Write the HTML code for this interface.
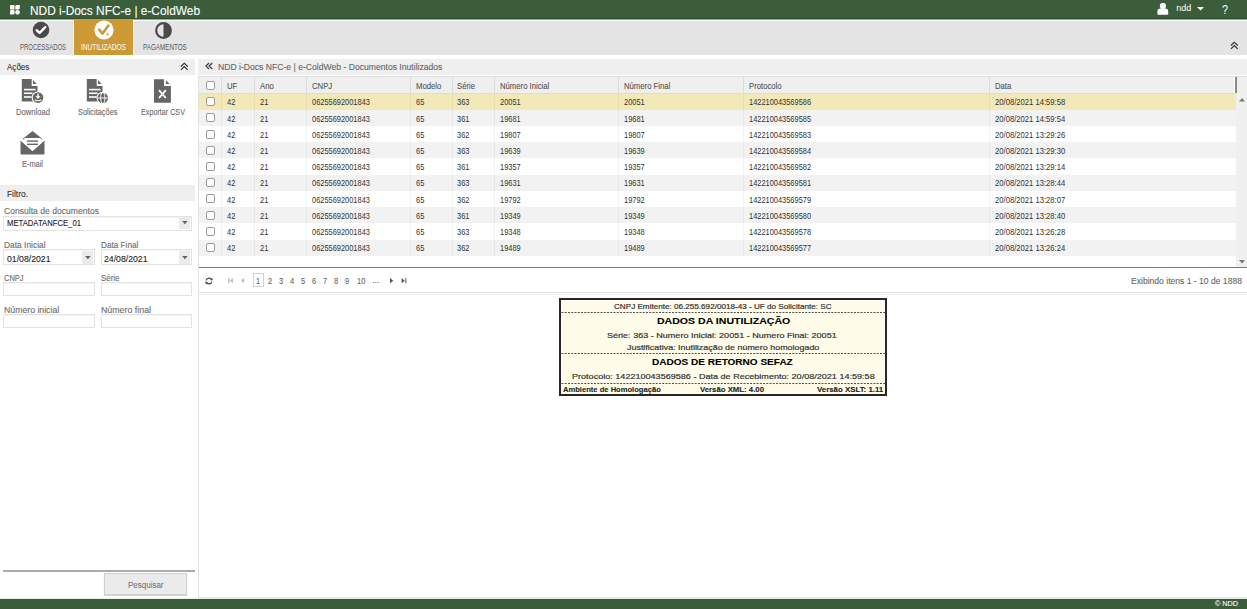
<!DOCTYPE html>
<html><head><meta charset="utf-8"><style>
html,body{margin:0;padding:0;}
body{width:1247px;height:609px;position:relative;overflow:hidden;background:#fff;font-family:"Liberation Sans",sans-serif;}
.r{position:absolute;}
.t{position:absolute;white-space:nowrap;line-height:1;transform-origin:0 0;-webkit-text-stroke:0.1px currentColor;}
</style></head><body>
<div class="r" style="left:0px;top:0px;width:1247px;height:19px;background:#3b5d39;"></div>
<div class="r" style="left:0px;top:18px;width:1247px;height:1px;background:#2f4f2d;"></div>
<div class="r" style="left:0px;top:19px;width:1247px;height:1px;background:#9aa898;"></div>
<div class="r" style="left:0px;top:20px;width:1247px;height:35px;background:#e4e4e4;"></div>
<div class="r" style="left:0px;top:20px;width:1247px;height:1px;background:#f6f6f6;"></div>
<svg class="r" style="left:9.8px;top:4.8px" width="10" height="10" viewBox="0 0 10 10"><rect x="0" y="0" width="4.5" height="4.5" rx="0.5" fill="#fff"/><path d="M5.3 1.6 Q5.3 0 6.9 0 H9.8 V2.9 Q9.8 4.5 8.2 4.5 H5.3 Z" fill="#fff"/><path d="M0 6.5 Q0 5.1 1.4 5.1 H4.5 V8.2 Q4.5 9.6 3.1 9.6 H0 Z" fill="#fff"/><circle cx="7.55" cy="7.35" r="2.3" fill="#fff"/></svg>
<div class="t" style="left:30.00px;top:5.00px;font-size:12px;color:#fff;transform:scaleX(0.991);">NDD i-Docs NFC-e | e-ColdWeb</div>
<svg class="r" style="left:1157px;top:3px" width="12" height="12" viewBox="0 0 12 12"><circle cx="5.9" cy="2.9" r="3.1" fill="#fff"/><path d="M0.4 11 V8.5 Q0.4 5.4 3.4 5.4 H8.4 Q11.2 5.4 11.2 8.5 V11 Q11.2 11.8 10.4 11.8 H1.2 Q0.4 11.8 0.4 11 Z" fill="#fff"/></svg>
<div class="t" style="left:1176.30px;top:4.00px;font-size:9px;color:#fff;-webkit-text-stroke:0;">ndd</div>
<svg class="r" style="left:1197px;top:7px" width="7" height="4" viewBox="0 0 7 4"><path d="M0 0 L7 0 L3.5 3.6Z" fill="#fff"/></svg>
<div class="t" style="left:1222.30px;top:4.00px;font-size:12.5px;color:#fff;transform:scaleX(0.863);-webkit-text-stroke:0;">?</div>
<div class="r" style="left:74px;top:20px;width:59px;height:35px;background:#cc9934;"></div>
<div class="r" style="left:73px;top:20px;width:1px;height:35px;background:#f4f4f4;"></div>
<div class="r" style="left:133px;top:20px;width:1px;height:35px;background:#f4f4f4;"></div>
<svg class="r" style="left:32px;top:21px" width="18" height="18" viewBox="0 0 18 18"><circle cx="9" cy="9" r="8.3" fill="#4a4a4a"/><path d="M4.6 9.2 L7.6 12 L13.2 6.2" stroke="#fff" stroke-width="2.4" fill="none" stroke-linecap="round" stroke-linejoin="round"/></svg>
<svg class="r" style="left:93.5px;top:20px" width="20" height="20" viewBox="0 0 20 20"><circle cx="10" cy="10" r="9.6" fill="#fff"/><path d="M5.2 9.6 L8.6 13.6 L14.4 5.6" stroke="#cc9934" stroke-width="2.6" fill="none" stroke-linecap="round" stroke-linejoin="round"/><path d="M12.2 15.2 L13.6 12.6 L15 15.2Z" fill="#cc9934"/></svg>
<svg class="r" style="left:155px;top:22px" width="17" height="17" viewBox="0 0 17 17"><circle cx="8.5" cy="8.5" r="7.3" fill="none" stroke="#4a4a4a" stroke-width="2.2"/><path d="M8.5 1.2 A7.3 7.3 0 0 1 8.5 15.8 Z" fill="#4a4a4a"/></svg>
<div class="t" style="left:19.50px;top:43.00px;font-size:8.6px;color:#5a5a5a;transform:scaleX(0.694);-webkit-text-stroke:0;">PROCESSADOS</div>
<div class="t" style="left:81.20px;top:43.00px;font-size:8.6px;color:#ffffff;transform:scaleX(0.759);-webkit-text-stroke:0;">INUTILIZADOS</div>
<div class="t" style="left:143.00px;top:43.00px;font-size:8.6px;color:#5a5a5a;transform:scaleX(0.731);-webkit-text-stroke:0;">PAGAMENTOS</div>
<svg class="r" style="left:1229.5px;top:41.2px" width="9" height="9" viewBox="0 0 9 9"><path d="M0.9 4.5 L4.3 1.2 L7.7 4.5 M0.9 7.8 L4.3 4.5 L7.7 7.8" stroke="#2a2a2a" stroke-width="1.1" fill="none"/></svg>
<div class="r" style="left:0px;top:59px;width:195px;height:16px;background:#efefef;"></div>
<div class="t" style="left:6.80px;top:64.00px;font-size:8.2px;color:#333;transform:scaleX(0.983);">Ações</div>
<svg class="r" style="left:180px;top:62px" width="9" height="9" viewBox="0 0 9 9"><path d="M0.9 4.5 L4.3 1.2 L7.7 4.5 M0.9 7.8 L4.3 4.5 L7.7 7.8" stroke="#2a2a2a" stroke-width="1.1" fill="none"/></svg>
<svg class="r" style="left:18px;top:76px" width="30" height="30" viewBox="0 0 30 30"><path d="M3.8 3 H13.7 V10 H19.5 V25.5 H3.8Z" fill="#666666"/><path d="M15 4.1 L18.7 7.9 H15Z" fill="#666666"/>
<rect x="6" y="12.8" width="11.5" height="1.6" fill="#fff"/><rect x="6" y="16.5" width="8.5" height="1.5" fill="#fff"/><rect x="6" y="20.2" width="7.5" height="1.6" fill="#fff"/>
<circle cx="20" cy="21.6" r="6.4" fill="#fff"/><circle cx="20" cy="21.6" r="5.3" fill="#666666"/>
<rect x="19.3" y="17.5" width="1.4" height="3.4" fill="#fff"/><path d="M17.4 20.2 H22.6 L20 23 Z" fill="#fff"/>
<path d="M17.3 23.4 V24.6 H22.7 V23.4" stroke="#fff" stroke-width="1" fill="none"/>
</svg>
<div class="t" style="left:15.50px;top:109.00px;font-size:8.2px;color:#6b6b6b;transform:scaleX(0.932);">Download</div>
<svg class="r" style="left:83px;top:76px" width="30" height="30" viewBox="0 0 30 30"><path d="M3.8 3 H13.7 V10 H19.5 V25.5 H3.8Z" fill="#666666"/><path d="M15 4.1 L18.7 7.9 H15Z" fill="#666666"/>
<rect x="6" y="12.8" width="11.5" height="1.6" fill="#fff"/><rect x="6" y="16.5" width="8.5" height="1.5" fill="#fff"/><rect x="6" y="20.2" width="7.5" height="1.6" fill="#fff"/>
<circle cx="19.8" cy="22" r="6.3" fill="#fff"/><circle cx="19.8" cy="22" r="5.3" fill="#666666"/>
<ellipse cx="19.8" cy="22" rx="2.1" ry="5.4" fill="none" stroke="#fff" stroke-width="0.9"/><path d="M14.3 22 H25.3" stroke="#fff" stroke-width="0.9"/>
</svg>
<div class="t" style="left:77.80px;top:109.00px;font-size:8.2px;color:#6b6b6b;transform:scaleX(0.903);">Solicitações</div>
<svg class="r" style="left:148px;top:76px" width="30" height="30" viewBox="0 0 30 30">
<path d="M6 3.2 H16 V9.9 H22.9 V26.8 H6 Z" fill="#666666"/><path d="M17.9 4.3 L21.7 7.9 H17.9Z" fill="#666666"/>
<path d="M11 14.2 L17.8 22 M17.8 14.2 L11 22" stroke="#fff" stroke-width="1.9"/>
</svg>
<div class="t" style="left:141.00px;top:109.00px;font-size:8.2px;color:#6b6b6b;transform:scaleX(0.878);">Exportar CSV</div>
<svg class="r" style="left:18px;top:128px" width="30" height="30" viewBox="0 0 30 30">
<path d="M14.5 3 L24.8 11.2 H4.2 Z" fill="#666666"/>
<path d="M6.3 9.9 H22.7 V11.8 L14.5 21.6 L6.3 11.8 Z" fill="#fff"/>
<path d="M2.5 12.3 L14.5 22.9 L26.5 12.3 V25.6 Q26.5 26.6 25.5 26.6 H3.5 Q2.5 26.6 2.5 25.6 Z" fill="#666666"/>
<path d="M2.2 11.5 L14.5 22.2 L26.8 11.5" stroke="#fff" stroke-width="1.1" fill="none"/>
<rect x="9" y="12.4" width="11" height="1.4" fill="#666666"/><rect x="9" y="15.6" width="11" height="1.4" fill="#666666"/>
</svg>
<div class="t" style="left:22.30px;top:161.00px;font-size:8.2px;color:#6b6b6b;transform:scaleX(0.904);">E-mail</div>
<div class="r" style="left:0px;top:185px;width:195px;height:16px;background:#efefef;"></div>
<div class="t" style="left:7.00px;top:191.00px;font-size:8.2px;color:#333;transform:scaleX(1.024);">Filtro.</div>
<div class="t" style="left:3.60px;top:207.00px;font-size:8.3px;color:#6b6b6b;transform:scaleX(1.035);">Consulta de documentos</div>
<div class="r" style="left:3px;top:215.5px;width:189px;height:15px;background:#fff;border:1px solid #e3e3e3;box-sizing:border-box;box-shadow:inset 0 1px 1px #f4f4f4;"></div>
<div class="r" style="left:178.8px;top:217.2px;width:11.6px;height:11.6px;background:#ebebeb;"></div>
<svg class="r" style="left:181.8px;top:221.4px" width="6" height="4" viewBox="0 0 6 4"><path d="M0.2 0 H5.6 L2.9 3.2Z" fill="#606060"/></svg>
<div class="t" style="left:7.20px;top:219.00px;font-size:8.3px;color:#222;transform:scaleX(0.927);">METADATANFCE_01</div>
<div class="t" style="left:3.60px;top:241.00px;font-size:8.3px;color:#6b6b6b;transform:scaleX(1.013);">Data Inicial</div>
<div class="t" style="left:101.20px;top:241.00px;font-size:8.3px;color:#6b6b6b;transform:scaleX(0.989);">Data Final</div>
<div class="r" style="left:3px;top:249.3px;width:92px;height:16px;background:#fff;border:1px solid #e3e3e3;box-sizing:border-box;box-shadow:inset 0 1px 1px #f4f4f4;"></div>
<div class="r" style="left:81.8px;top:251.0px;width:11.6px;height:12.6px;background:#ebebeb;"></div>
<svg class="r" style="left:84.8px;top:255.70000000000002px" width="6" height="4" viewBox="0 0 6 4"><path d="M0.2 0 H5.6 L2.9 3.2Z" fill="#606060"/></svg>
<div class="r" style="left:101px;top:249.3px;width:91px;height:16px;background:#fff;border:1px solid #e3e3e3;box-sizing:border-box;box-shadow:inset 0 1px 1px #f4f4f4;"></div>
<div class="r" style="left:178.8px;top:251.0px;width:11.6px;height:12.6px;background:#ebebeb;"></div>
<svg class="r" style="left:181.8px;top:255.70000000000002px" width="6" height="4" viewBox="0 0 6 4"><path d="M0.2 0 H5.6 L2.9 3.2Z" fill="#606060"/></svg>
<div class="t" style="left:6.60px;top:255.00px;font-size:8.4px;color:#222;transform:scaleX(1.039);">01/08/2021</div>
<div class="t" style="left:103.90px;top:255.00px;font-size:8.4px;color:#222;transform:scaleX(1.039);">24/08/2021</div>
<div class="t" style="left:3.60px;top:274.00px;font-size:8.3px;color:#6b6b6b;transform:scaleX(0.900);">CNPJ</div>
<div class="t" style="left:101.20px;top:274.00px;font-size:8.3px;color:#6b6b6b;transform:scaleX(0.955);">Série</div>
<div class="r" style="left:3px;top:282.2px;width:92px;height:14px;background:#fff;border:1px solid #e3e3e3;box-sizing:border-box;box-shadow:inset 0 1px 1px #f4f4f4;"></div>
<div class="r" style="left:101px;top:282.2px;width:91px;height:14px;background:#fff;border:1px solid #e3e3e3;box-sizing:border-box;box-shadow:inset 0 1px 1px #f4f4f4;"></div>
<div class="t" style="left:3.60px;top:306.00px;font-size:8.3px;color:#6b6b6b;transform:scaleX(1.050);">Número inicial</div>
<div class="t" style="left:101.20px;top:306.00px;font-size:8.3px;color:#6b6b6b;transform:scaleX(1.063);">Número final</div>
<div class="r" style="left:3px;top:314.4px;width:92px;height:14px;background:#fff;border:1px solid #e3e3e3;box-sizing:border-box;box-shadow:inset 0 1px 1px #f4f4f4;"></div>
<div class="r" style="left:101px;top:314.4px;width:91px;height:14px;background:#fff;border:1px solid #e3e3e3;box-sizing:border-box;box-shadow:inset 0 1px 1px #f4f4f4;"></div>
<div class="r" style="left:3px;top:570px;width:192px;height:1.5px;background:#ababab;"></div>
<div class="r" style="left:104px;top:573px;width:83px;height:22px;background:#ebebeb;border:1px solid #cfcfcf;box-sizing:border-box;box-shadow:0 1px 1px #d8d8d8;"></div>
<div class="t" style="left:127.80px;top:581.00px;font-size:8.3px;color:#777;transform:scaleX(0.962);">Pesquisar</div>
<div class="r" style="left:198px;top:59px;width:1049px;height:16px;background:#efefef;"></div>
<svg class="r" style="left:205px;top:62px" width="8" height="8" viewBox="0 0 8 8"><path d="M4 1 L1 4 L4 7 M7.2 1 L4.2 4 L7.2 7" stroke="#444" stroke-width="1.3" fill="none"/></svg>
<div class="t" style="left:217.60px;top:63.00px;font-size:8.3px;color:#666;transform:scaleX(1.037);">NDD i-Docs NFC-e | e-ColdWeb - Documentos Inutilizados</div>
<div class="r" style="left:198px;top:76px;width:1049px;height:522px;border-left:1px solid #e2e2e2;border-bottom:1px solid #e8e8e8;box-sizing:border-box;"></div>
<div class="r" style="left:199px;top:76px;width:1048px;height:17.6px;background:#efefef;border-top:1px solid #dedede;border-bottom:1px solid #dcdcdc;box-sizing:border-box;"></div>
<div class="r" style="left:199px;top:93.5px;width:1037px;height:16.23px;background:#f3e8b8;"></div>
<div class="r" style="left:199px;top:109.73px;width:1037px;height:16.23px;background:#f2f2f2;"></div>
<div class="r" style="left:199px;top:125.96px;width:1037px;height:16.23px;background:#ffffff;"></div>
<div class="r" style="left:199px;top:142.19px;width:1037px;height:16.23px;background:#f2f2f2;"></div>
<div class="r" style="left:199px;top:158.42px;width:1037px;height:16.23px;background:#ffffff;"></div>
<div class="r" style="left:199px;top:174.65px;width:1037px;height:16.23px;background:#f2f2f2;"></div>
<div class="r" style="left:199px;top:190.88px;width:1037px;height:16.23px;background:#ffffff;"></div>
<div class="r" style="left:199px;top:207.11px;width:1037px;height:16.23px;background:#f2f2f2;"></div>
<div class="r" style="left:199px;top:223.34px;width:1037px;height:16.23px;background:#ffffff;"></div>
<div class="r" style="left:199px;top:239.57px;width:1037px;height:16.23px;background:#f2f2f2;"></div>
<div class="r" style="left:1236px;top:93.3px;width:11px;height:174px;background:#f0f0f0;"></div>
<svg class="r" style="left:1239px;top:97.5px" width="6" height="4" viewBox="0 0 6 4"><path d="M0 3.6 H6 L3 0Z" fill="#777"/></svg>
<svg class="r" style="left:1239px;top:259.5px" width="6" height="4" viewBox="0 0 6 4"><path d="M0 0 H6 L3 3.4Z" fill="#777"/></svg>
<div class="r" style="left:1235px;top:76.5px;width:1.6px;height:16.5px;background:#8a8a8a;"></div>
<div class="r" style="left:1233.8px;top:76.5px;width:1px;height:16.5px;background:#fff;"></div>
<div class="r" style="left:221.3px;top:77px;width:1px;height:16px;background:#dcdcdc;"></div>
<div class="r" style="left:221.3px;top:93.5px;width:1px;height:162.3px;background:rgba(0,0,0,0.045);"></div>
<div class="r" style="left:253.6px;top:77px;width:1px;height:16px;background:#dcdcdc;"></div>
<div class="r" style="left:253.6px;top:93.5px;width:1px;height:162.3px;background:rgba(0,0,0,0.045);"></div>
<div class="r" style="left:306.0px;top:77px;width:1px;height:16px;background:#dcdcdc;"></div>
<div class="r" style="left:306.0px;top:93.5px;width:1px;height:162.3px;background:rgba(0,0,0,0.045);"></div>
<div class="r" style="left:410.1px;top:77px;width:1px;height:16px;background:#dcdcdc;"></div>
<div class="r" style="left:410.1px;top:93.5px;width:1px;height:162.3px;background:rgba(0,0,0,0.045);"></div>
<div class="r" style="left:452.0px;top:77px;width:1px;height:16px;background:#dcdcdc;"></div>
<div class="r" style="left:452.0px;top:93.5px;width:1px;height:162.3px;background:rgba(0,0,0,0.045);"></div>
<div class="r" style="left:493.9px;top:77px;width:1px;height:16px;background:#dcdcdc;"></div>
<div class="r" style="left:493.9px;top:93.5px;width:1px;height:162.3px;background:rgba(0,0,0,0.045);"></div>
<div class="r" style="left:618.1px;top:77px;width:1px;height:16px;background:#dcdcdc;"></div>
<div class="r" style="left:618.1px;top:93.5px;width:1px;height:162.3px;background:rgba(0,0,0,0.045);"></div>
<div class="r" style="left:743.3px;top:77px;width:1px;height:16px;background:#dcdcdc;"></div>
<div class="r" style="left:743.3px;top:93.5px;width:1px;height:162.3px;background:rgba(0,0,0,0.045);"></div>
<div class="r" style="left:989.3px;top:77px;width:1px;height:16px;background:#dcdcdc;"></div>
<div class="r" style="left:989.3px;top:93.5px;width:1px;height:162.3px;background:rgba(0,0,0,0.045);"></div>
<div class="r" style="left:206.2px;top:81px;width:9px;height:9px;background:#fff;border:1px solid #9c9c9c;border-radius:2px;box-sizing:border-box;"></div>
<div class="r" style="left:206.2px;top:97.1px;width:9px;height:9px;background:#fff;border:1px solid #9c9c9c;border-radius:2px;box-sizing:border-box;"></div>
<div class="r" style="left:206.2px;top:113.33px;width:9px;height:9px;background:#fff;border:1px solid #9c9c9c;border-radius:2px;box-sizing:border-box;"></div>
<div class="r" style="left:206.2px;top:129.56px;width:9px;height:9px;background:#fff;border:1px solid #9c9c9c;border-radius:2px;box-sizing:border-box;"></div>
<div class="r" style="left:206.2px;top:145.79px;width:9px;height:9px;background:#fff;border:1px solid #9c9c9c;border-radius:2px;box-sizing:border-box;"></div>
<div class="r" style="left:206.2px;top:162.02px;width:9px;height:9px;background:#fff;border:1px solid #9c9c9c;border-radius:2px;box-sizing:border-box;"></div>
<div class="r" style="left:206.2px;top:178.25px;width:9px;height:9px;background:#fff;border:1px solid #9c9c9c;border-radius:2px;box-sizing:border-box;"></div>
<div class="r" style="left:206.2px;top:194.48px;width:9px;height:9px;background:#fff;border:1px solid #9c9c9c;border-radius:2px;box-sizing:border-box;"></div>
<div class="r" style="left:206.2px;top:210.71px;width:9px;height:9px;background:#fff;border:1px solid #9c9c9c;border-radius:2px;box-sizing:border-box;"></div>
<div class="r" style="left:206.2px;top:226.94px;width:9px;height:9px;background:#fff;border:1px solid #9c9c9c;border-radius:2px;box-sizing:border-box;"></div>
<div class="r" style="left:206.2px;top:243.17px;width:9px;height:9px;background:#fff;border:1px solid #9c9c9c;border-radius:2px;box-sizing:border-box;"></div>
<div class="t" style="left:227.00px;top:82.00px;font-size:8.3px;color:#555;transform:scaleX(0.930);">UF</div>
<div class="t" style="left:259.50px;top:82.00px;font-size:8.3px;color:#555;transform:scaleX(0.930);">Ano</div>
<div class="t" style="left:311.80px;top:82.00px;font-size:8.3px;color:#555;transform:scaleX(0.930);">CNPJ</div>
<div class="t" style="left:415.50px;top:82.00px;font-size:8.3px;color:#555;transform:scaleX(0.930);">Modelo</div>
<div class="t" style="left:457.30px;top:82.00px;font-size:8.3px;color:#555;transform:scaleX(0.930);">Série</div>
<div class="t" style="left:500.10px;top:82.00px;font-size:8.3px;color:#555;transform:scaleX(0.930);">Número Inicial</div>
<div class="t" style="left:624.40px;top:82.00px;font-size:8.3px;color:#555;transform:scaleX(0.930);">Número Final</div>
<div class="t" style="left:749.00px;top:82.00px;font-size:8.3px;color:#555;transform:scaleX(0.930);">Protocolo</div>
<div class="t" style="left:995.20px;top:82.00px;font-size:8.3px;color:#555;transform:scaleX(0.930);">Data</div>
<div class="t" style="left:227.00px;top:98.00px;font-size:8.4px;color:#333;transform:scaleX(0.888);-webkit-text-stroke:0;">42</div>
<div class="t" style="left:259.50px;top:98.00px;font-size:8.4px;color:#333;transform:scaleX(0.888);-webkit-text-stroke:0;">21</div>
<div class="t" style="left:311.80px;top:98.00px;font-size:8.4px;color:#333;transform:scaleX(0.888);-webkit-text-stroke:0;">06255692001843</div>
<div class="t" style="left:415.50px;top:98.00px;font-size:8.4px;color:#333;transform:scaleX(0.888);-webkit-text-stroke:0;">65</div>
<div class="t" style="left:457.30px;top:98.00px;font-size:8.4px;color:#333;transform:scaleX(0.888);-webkit-text-stroke:0;">363</div>
<div class="t" style="left:500.10px;top:98.00px;font-size:8.4px;color:#333;transform:scaleX(0.888);-webkit-text-stroke:0;">20051</div>
<div class="t" style="left:624.40px;top:98.00px;font-size:8.4px;color:#333;transform:scaleX(0.888);-webkit-text-stroke:0;">20051</div>
<div class="t" style="left:749.00px;top:98.00px;font-size:8.4px;color:#333;transform:scaleX(0.888);-webkit-text-stroke:0;">142210043569586</div>
<div class="t" style="left:995.20px;top:98.00px;font-size:8.4px;color:#333;transform:scaleX(0.913);-webkit-text-stroke:0;">20/08/2021 14:59:58</div>
<div class="t" style="left:227.00px;top:115.00px;font-size:8.4px;color:#333;transform:scaleX(0.888);-webkit-text-stroke:0;">42</div>
<div class="t" style="left:259.50px;top:115.00px;font-size:8.4px;color:#333;transform:scaleX(0.888);-webkit-text-stroke:0;">21</div>
<div class="t" style="left:311.80px;top:115.00px;font-size:8.4px;color:#333;transform:scaleX(0.888);-webkit-text-stroke:0;">06255692001843</div>
<div class="t" style="left:415.50px;top:115.00px;font-size:8.4px;color:#333;transform:scaleX(0.888);-webkit-text-stroke:0;">65</div>
<div class="t" style="left:457.30px;top:115.00px;font-size:8.4px;color:#333;transform:scaleX(0.888);-webkit-text-stroke:0;">361</div>
<div class="t" style="left:500.10px;top:115.00px;font-size:8.4px;color:#333;transform:scaleX(0.888);-webkit-text-stroke:0;">19681</div>
<div class="t" style="left:624.40px;top:115.00px;font-size:8.4px;color:#333;transform:scaleX(0.888);-webkit-text-stroke:0;">19681</div>
<div class="t" style="left:749.00px;top:115.00px;font-size:8.4px;color:#333;transform:scaleX(0.888);-webkit-text-stroke:0;">142210043569585</div>
<div class="t" style="left:995.20px;top:115.00px;font-size:8.4px;color:#333;transform:scaleX(0.913);-webkit-text-stroke:0;">20/08/2021 14:59:54</div>
<div class="t" style="left:227.00px;top:131.00px;font-size:8.4px;color:#333;transform:scaleX(0.888);-webkit-text-stroke:0;">42</div>
<div class="t" style="left:259.50px;top:131.00px;font-size:8.4px;color:#333;transform:scaleX(0.888);-webkit-text-stroke:0;">21</div>
<div class="t" style="left:311.80px;top:131.00px;font-size:8.4px;color:#333;transform:scaleX(0.888);-webkit-text-stroke:0;">06255692001843</div>
<div class="t" style="left:415.50px;top:131.00px;font-size:8.4px;color:#333;transform:scaleX(0.888);-webkit-text-stroke:0;">65</div>
<div class="t" style="left:457.30px;top:131.00px;font-size:8.4px;color:#333;transform:scaleX(0.888);-webkit-text-stroke:0;">362</div>
<div class="t" style="left:500.10px;top:131.00px;font-size:8.4px;color:#333;transform:scaleX(0.888);-webkit-text-stroke:0;">19807</div>
<div class="t" style="left:624.40px;top:131.00px;font-size:8.4px;color:#333;transform:scaleX(0.888);-webkit-text-stroke:0;">19807</div>
<div class="t" style="left:749.00px;top:131.00px;font-size:8.4px;color:#333;transform:scaleX(0.888);-webkit-text-stroke:0;">142210043569583</div>
<div class="t" style="left:995.20px;top:131.00px;font-size:8.4px;color:#333;transform:scaleX(0.913);-webkit-text-stroke:0;">20/08/2021 13:29:26</div>
<div class="t" style="left:227.00px;top:147.00px;font-size:8.4px;color:#333;transform:scaleX(0.888);-webkit-text-stroke:0;">42</div>
<div class="t" style="left:259.50px;top:147.00px;font-size:8.4px;color:#333;transform:scaleX(0.888);-webkit-text-stroke:0;">21</div>
<div class="t" style="left:311.80px;top:147.00px;font-size:8.4px;color:#333;transform:scaleX(0.888);-webkit-text-stroke:0;">06255692001843</div>
<div class="t" style="left:415.50px;top:147.00px;font-size:8.4px;color:#333;transform:scaleX(0.888);-webkit-text-stroke:0;">65</div>
<div class="t" style="left:457.30px;top:147.00px;font-size:8.4px;color:#333;transform:scaleX(0.888);-webkit-text-stroke:0;">363</div>
<div class="t" style="left:500.10px;top:147.00px;font-size:8.4px;color:#333;transform:scaleX(0.888);-webkit-text-stroke:0;">19639</div>
<div class="t" style="left:624.40px;top:147.00px;font-size:8.4px;color:#333;transform:scaleX(0.888);-webkit-text-stroke:0;">19639</div>
<div class="t" style="left:749.00px;top:147.00px;font-size:8.4px;color:#333;transform:scaleX(0.888);-webkit-text-stroke:0;">142210043569584</div>
<div class="t" style="left:995.20px;top:147.00px;font-size:8.4px;color:#333;transform:scaleX(0.913);-webkit-text-stroke:0;">20/08/2021 13:29:30</div>
<div class="t" style="left:227.00px;top:163.00px;font-size:8.4px;color:#333;transform:scaleX(0.888);-webkit-text-stroke:0;">42</div>
<div class="t" style="left:259.50px;top:163.00px;font-size:8.4px;color:#333;transform:scaleX(0.888);-webkit-text-stroke:0;">21</div>
<div class="t" style="left:311.80px;top:163.00px;font-size:8.4px;color:#333;transform:scaleX(0.888);-webkit-text-stroke:0;">06255692001843</div>
<div class="t" style="left:415.50px;top:163.00px;font-size:8.4px;color:#333;transform:scaleX(0.888);-webkit-text-stroke:0;">65</div>
<div class="t" style="left:457.30px;top:163.00px;font-size:8.4px;color:#333;transform:scaleX(0.888);-webkit-text-stroke:0;">361</div>
<div class="t" style="left:500.10px;top:163.00px;font-size:8.4px;color:#333;transform:scaleX(0.888);-webkit-text-stroke:0;">19357</div>
<div class="t" style="left:624.40px;top:163.00px;font-size:8.4px;color:#333;transform:scaleX(0.888);-webkit-text-stroke:0;">19357</div>
<div class="t" style="left:749.00px;top:163.00px;font-size:8.4px;color:#333;transform:scaleX(0.888);-webkit-text-stroke:0;">142210043569582</div>
<div class="t" style="left:995.20px;top:163.00px;font-size:8.4px;color:#333;transform:scaleX(0.913);-webkit-text-stroke:0;">20/08/2021 13:29:14</div>
<div class="t" style="left:227.00px;top:179.00px;font-size:8.4px;color:#333;transform:scaleX(0.888);-webkit-text-stroke:0;">42</div>
<div class="t" style="left:259.50px;top:179.00px;font-size:8.4px;color:#333;transform:scaleX(0.888);-webkit-text-stroke:0;">21</div>
<div class="t" style="left:311.80px;top:179.00px;font-size:8.4px;color:#333;transform:scaleX(0.888);-webkit-text-stroke:0;">06255692001843</div>
<div class="t" style="left:415.50px;top:179.00px;font-size:8.4px;color:#333;transform:scaleX(0.888);-webkit-text-stroke:0;">65</div>
<div class="t" style="left:457.30px;top:179.00px;font-size:8.4px;color:#333;transform:scaleX(0.888);-webkit-text-stroke:0;">363</div>
<div class="t" style="left:500.10px;top:179.00px;font-size:8.4px;color:#333;transform:scaleX(0.888);-webkit-text-stroke:0;">19631</div>
<div class="t" style="left:624.40px;top:179.00px;font-size:8.4px;color:#333;transform:scaleX(0.888);-webkit-text-stroke:0;">19631</div>
<div class="t" style="left:749.00px;top:179.00px;font-size:8.4px;color:#333;transform:scaleX(0.888);-webkit-text-stroke:0;">142210043569581</div>
<div class="t" style="left:995.20px;top:179.00px;font-size:8.4px;color:#333;transform:scaleX(0.913);-webkit-text-stroke:0;">20/08/2021 13:28:44</div>
<div class="t" style="left:227.00px;top:196.00px;font-size:8.4px;color:#333;transform:scaleX(0.888);-webkit-text-stroke:0;">42</div>
<div class="t" style="left:259.50px;top:196.00px;font-size:8.4px;color:#333;transform:scaleX(0.888);-webkit-text-stroke:0;">21</div>
<div class="t" style="left:311.80px;top:196.00px;font-size:8.4px;color:#333;transform:scaleX(0.888);-webkit-text-stroke:0;">06255692001843</div>
<div class="t" style="left:415.50px;top:196.00px;font-size:8.4px;color:#333;transform:scaleX(0.888);-webkit-text-stroke:0;">65</div>
<div class="t" style="left:457.30px;top:196.00px;font-size:8.4px;color:#333;transform:scaleX(0.888);-webkit-text-stroke:0;">362</div>
<div class="t" style="left:500.10px;top:196.00px;font-size:8.4px;color:#333;transform:scaleX(0.888);-webkit-text-stroke:0;">19792</div>
<div class="t" style="left:624.40px;top:196.00px;font-size:8.4px;color:#333;transform:scaleX(0.888);-webkit-text-stroke:0;">19792</div>
<div class="t" style="left:749.00px;top:196.00px;font-size:8.4px;color:#333;transform:scaleX(0.888);-webkit-text-stroke:0;">142210043569579</div>
<div class="t" style="left:995.20px;top:196.00px;font-size:8.4px;color:#333;transform:scaleX(0.913);-webkit-text-stroke:0;">20/08/2021 13:28:07</div>
<div class="t" style="left:227.00px;top:212.00px;font-size:8.4px;color:#333;transform:scaleX(0.888);-webkit-text-stroke:0;">42</div>
<div class="t" style="left:259.50px;top:212.00px;font-size:8.4px;color:#333;transform:scaleX(0.888);-webkit-text-stroke:0;">21</div>
<div class="t" style="left:311.80px;top:212.00px;font-size:8.4px;color:#333;transform:scaleX(0.888);-webkit-text-stroke:0;">06255692001843</div>
<div class="t" style="left:415.50px;top:212.00px;font-size:8.4px;color:#333;transform:scaleX(0.888);-webkit-text-stroke:0;">65</div>
<div class="t" style="left:457.30px;top:212.00px;font-size:8.4px;color:#333;transform:scaleX(0.888);-webkit-text-stroke:0;">361</div>
<div class="t" style="left:500.10px;top:212.00px;font-size:8.4px;color:#333;transform:scaleX(0.888);-webkit-text-stroke:0;">19349</div>
<div class="t" style="left:624.40px;top:212.00px;font-size:8.4px;color:#333;transform:scaleX(0.888);-webkit-text-stroke:0;">19349</div>
<div class="t" style="left:749.00px;top:212.00px;font-size:8.4px;color:#333;transform:scaleX(0.888);-webkit-text-stroke:0;">142210043569580</div>
<div class="t" style="left:995.20px;top:212.00px;font-size:8.4px;color:#333;transform:scaleX(0.913);-webkit-text-stroke:0;">20/08/2021 13:28:40</div>
<div class="t" style="left:227.00px;top:228.00px;font-size:8.4px;color:#333;transform:scaleX(0.888);-webkit-text-stroke:0;">42</div>
<div class="t" style="left:259.50px;top:228.00px;font-size:8.4px;color:#333;transform:scaleX(0.888);-webkit-text-stroke:0;">21</div>
<div class="t" style="left:311.80px;top:228.00px;font-size:8.4px;color:#333;transform:scaleX(0.888);-webkit-text-stroke:0;">06255692001843</div>
<div class="t" style="left:415.50px;top:228.00px;font-size:8.4px;color:#333;transform:scaleX(0.888);-webkit-text-stroke:0;">65</div>
<div class="t" style="left:457.30px;top:228.00px;font-size:8.4px;color:#333;transform:scaleX(0.888);-webkit-text-stroke:0;">363</div>
<div class="t" style="left:500.10px;top:228.00px;font-size:8.4px;color:#333;transform:scaleX(0.888);-webkit-text-stroke:0;">19348</div>
<div class="t" style="left:624.40px;top:228.00px;font-size:8.4px;color:#333;transform:scaleX(0.888);-webkit-text-stroke:0;">19348</div>
<div class="t" style="left:749.00px;top:228.00px;font-size:8.4px;color:#333;transform:scaleX(0.888);-webkit-text-stroke:0;">142210043569578</div>
<div class="t" style="left:995.20px;top:228.00px;font-size:8.4px;color:#333;transform:scaleX(0.913);-webkit-text-stroke:0;">20/08/2021 13:26:28</div>
<div class="t" style="left:227.00px;top:244.00px;font-size:8.4px;color:#333;transform:scaleX(0.888);-webkit-text-stroke:0;">42</div>
<div class="t" style="left:259.50px;top:244.00px;font-size:8.4px;color:#333;transform:scaleX(0.888);-webkit-text-stroke:0;">21</div>
<div class="t" style="left:311.80px;top:244.00px;font-size:8.4px;color:#333;transform:scaleX(0.888);-webkit-text-stroke:0;">06255692001843</div>
<div class="t" style="left:415.50px;top:244.00px;font-size:8.4px;color:#333;transform:scaleX(0.888);-webkit-text-stroke:0;">65</div>
<div class="t" style="left:457.30px;top:244.00px;font-size:8.4px;color:#333;transform:scaleX(0.888);-webkit-text-stroke:0;">362</div>
<div class="t" style="left:500.10px;top:244.00px;font-size:8.4px;color:#333;transform:scaleX(0.888);-webkit-text-stroke:0;">19489</div>
<div class="t" style="left:624.40px;top:244.00px;font-size:8.4px;color:#333;transform:scaleX(0.888);-webkit-text-stroke:0;">19489</div>
<div class="t" style="left:749.00px;top:244.00px;font-size:8.4px;color:#333;transform:scaleX(0.888);-webkit-text-stroke:0;">142210043569577</div>
<div class="t" style="left:995.20px;top:244.00px;font-size:8.4px;color:#333;transform:scaleX(0.913);-webkit-text-stroke:0;">20/08/2021 13:26:24</div>
<div class="r" style="left:199px;top:266.8px;width:1048px;height:1.6px;background:#7a7a7a;"></div>
<div class="r" style="left:199px;top:292px;width:1048px;height:1px;background:#e0e0e0;"></div>
<div class="r" style="left:199px;top:294px;width:1048px;height:1px;background:#ededed;"></div>
<svg class="r" style="left:205px;top:276.5px" width="8" height="8" viewBox="0 0 8 8"><path d="M1.2 3.4 A2.9 2.9 0 0 1 6.6 2.6 M6.8 4.6 A2.9 2.9 0 0 1 1.4 5.4" stroke="#444" stroke-width="1.3" fill="none"/><path d="M5.2 2.9 L7.6 3.4 L7.4 0.8Z M2.8 5.1 L0.4 4.6 L0.6 7.2Z" fill="#444"/></svg>
<svg class="r" style="left:228px;top:278px" width="6" height="6" viewBox="0 0 6 6"><path d="M0.8 0 V5.2" stroke="#bdbdbd" stroke-width="1.3"/><path d="M5 0 V5.2 L1.8 2.6Z" fill="#bdbdbd"/></svg>
<svg class="r" style="left:240px;top:278px" width="5" height="6" viewBox="0 0 5 6"><path d="M4.1 0 V5.2 L0.9 2.6Z" fill="#bdbdbd"/></svg>
<div class="r" style="left:253px;top:273.2px;width:10.6px;height:13.6px;border:1px solid #d0d0d0;box-sizing:border-box;"></div>
<div class="t" style="left:256.20px;top:277.00px;font-size:8.3px;color:#666;transform:scaleX(0.900);">1</div>
<div class="t" style="left:267.50px;top:277.00px;font-size:8.3px;color:#666;transform:scaleX(0.900);">2</div>
<div class="t" style="left:278.60px;top:277.00px;font-size:8.3px;color:#666;transform:scaleX(0.900);">3</div>
<div class="t" style="left:289.50px;top:277.00px;font-size:8.3px;color:#666;transform:scaleX(0.900);">4</div>
<div class="t" style="left:301.00px;top:277.00px;font-size:8.3px;color:#666;transform:scaleX(0.900);">5</div>
<div class="t" style="left:312.00px;top:277.00px;font-size:8.3px;color:#666;transform:scaleX(0.900);">6</div>
<div class="t" style="left:323.20px;top:277.00px;font-size:8.3px;color:#666;transform:scaleX(0.900);">7</div>
<div class="t" style="left:334.00px;top:277.00px;font-size:8.3px;color:#666;transform:scaleX(0.900);">8</div>
<div class="t" style="left:345.40px;top:277.00px;font-size:8.3px;color:#666;transform:scaleX(0.900);">9</div>
<div class="t" style="left:357.00px;top:277.00px;font-size:8.3px;color:#666;transform:scaleX(0.900);">10</div>
<div class="t" style="left:372.20px;top:276.00px;font-size:8.6px;color:#555;">...</div>
<svg class="r" style="left:389px;top:278px" width="5" height="6" viewBox="0 0 5 6"><path d="M1 0 V5.3 L4.3 2.65Z" fill="#555"/></svg>
<svg class="r" style="left:400.5px;top:278px" width="6" height="6" viewBox="0 0 6 6"><path d="M0.6 0 V5.3 L3.8 2.65Z" fill="#555"/><path d="M4.9 0 V5.3" stroke="#555" stroke-width="1"/></svg>
<div class="t" style="left:1130.70px;top:277.00px;font-size:8.3px;color:#666;transform:scaleX(1.032);">Exibindo itens 1 - 10 de 1888</div>
<div class="r" style="left:559px;top:298.3px;width:328px;height:97.7px;background:#fffdea;border:2px solid #2b2528;box-sizing:border-box;box-shadow:inset 0 0 0 1px #fff;"></div>
<svg class="r" style="left:561px;top:311.7px" width="324" height="1.2"><line x1="0.5" y1="0.6" x2="324" y2="0.6" stroke="#505050" stroke-width="1.1" stroke-dasharray="2 1.25"/></svg>
<svg class="r" style="left:561px;top:353.2px" width="324" height="1.2"><line x1="0.5" y1="0.6" x2="324" y2="0.6" stroke="#505050" stroke-width="1.1" stroke-dasharray="2 1.25"/></svg>
<svg class="r" style="left:561px;top:382.5px" width="324" height="1.2"><line x1="0.5" y1="0.6" x2="324" y2="0.6" stroke="#505050" stroke-width="1.1" stroke-dasharray="2 1.25"/></svg>
<div class="t" style="left:614.00px;top:303.00px;font-size:7.9px;color:#333;transform:scaleX(1.029);-webkit-text-stroke:0.2px #333;">CNPJ Emitente: 06.255.692/0018-43 - UF do Solicitante: SC</div>
<div class="t" style="left:656.60px;top:317.00px;font-size:8.7px;color:#000;font-weight:700;transform:scaleX(1.215);">DADOS DA INUTILIZAÇÃO</div>
<div class="t" style="left:607.40px;top:332.00px;font-size:7.9px;color:#333;transform:scaleX(1.146);-webkit-text-stroke:0.2px #333;">Série: 363 - Numero Inicial: 20051 - Numero Final: 20051</div>
<div class="t" style="left:627.00px;top:344.00px;font-size:7.9px;color:#333;transform:scaleX(1.130);-webkit-text-stroke:0.2px #333;">Justificativa: Inutilização de número homologado</div>
<div class="t" style="left:652.30px;top:358.00px;font-size:8.7px;color:#000;font-weight:700;transform:scaleX(1.154);">DADOS DE RETORNO SEFAZ</div>
<div class="t" style="left:571.70px;top:373.00px;font-size:7.9px;color:#333;transform:scaleX(1.148);-webkit-text-stroke:0.2px #333;">Protocolo: 142210043569586 - Data de Recebimento: 20/08/2021 14:59:58</div>
<div class="t" style="left:562.50px;top:387.00px;font-size:6.8px;color:#222;font-weight:700;transform:scaleX(1.116);">Ambiente de Homologação</div>
<div class="t" style="left:700.00px;top:387.00px;font-size:6.8px;color:#222;font-weight:700;transform:scaleX(1.144);">Versão XML: 4.00</div>
<div class="t" style="left:817.00px;top:387.00px;font-size:6.8px;color:#222;font-weight:700;transform:scaleX(1.156);">Versão XSLT: 1.11</div>
<div class="r" style="left:0px;top:598.5px;width:1247px;height:10.5px;background:#3b5d39;"></div>
<div class="r" style="left:0px;top:597.5px;width:1247px;height:1px;background:#eaeaea;"></div>
<div class="t" style="left:1215.00px;top:600.00px;font-size:7.6px;color:#fff;transform:scaleX(0.951);">© NDD</div>
</body></html>
